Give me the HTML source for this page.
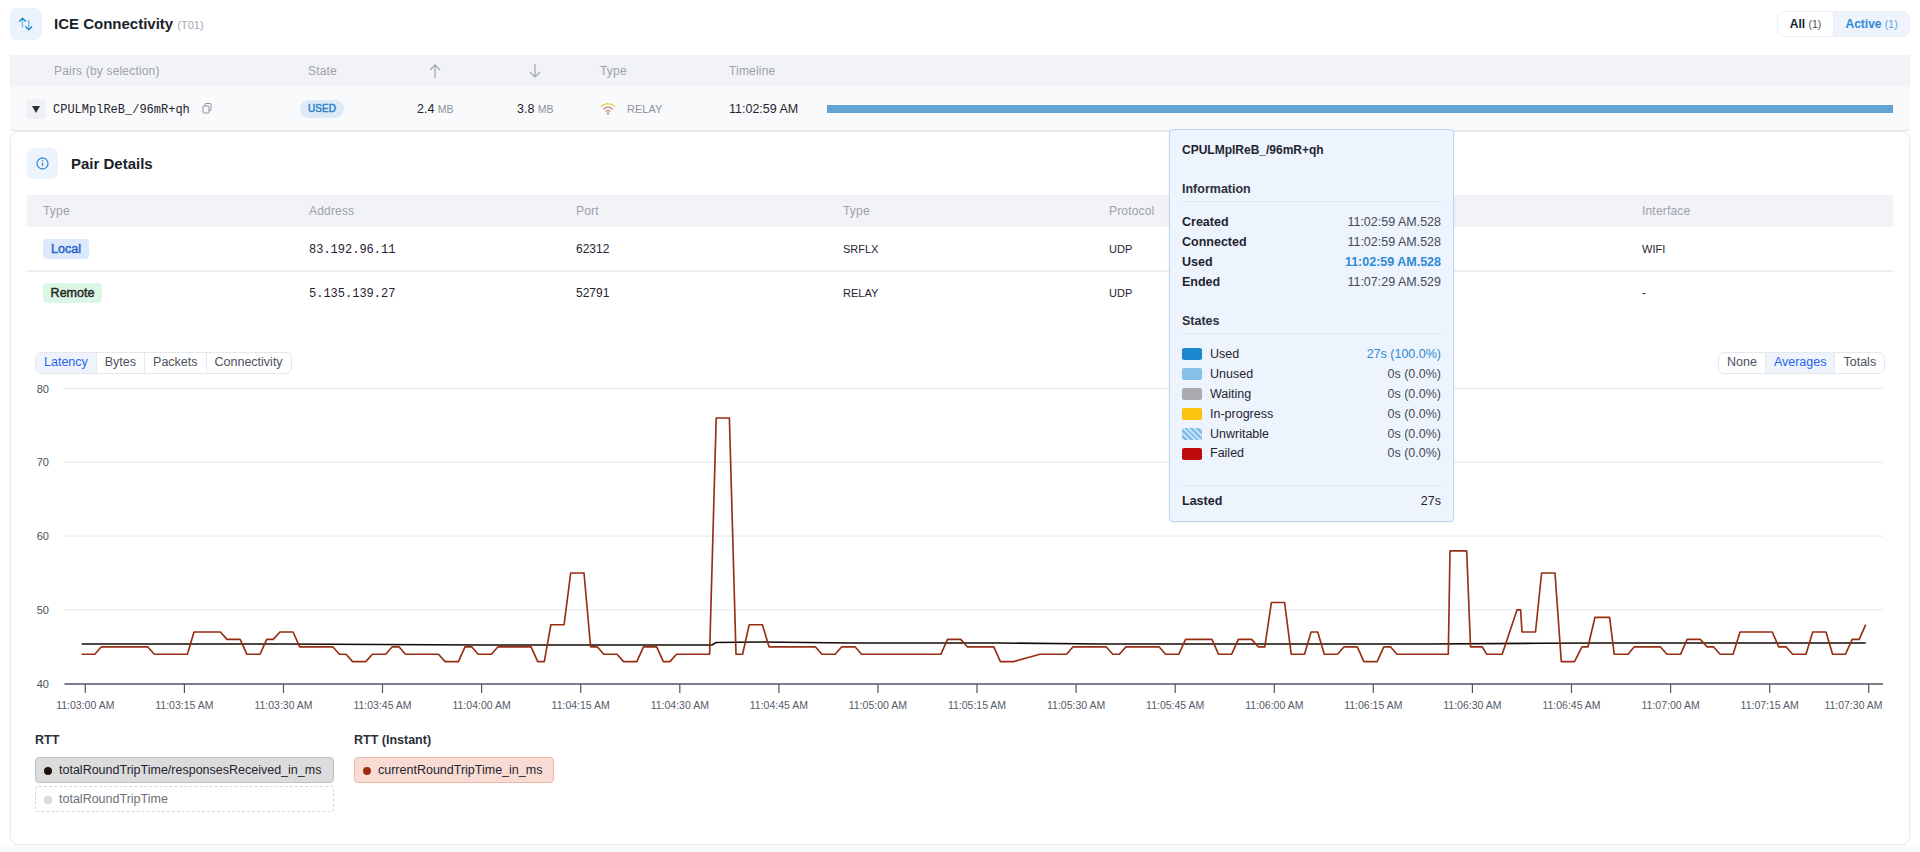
<!DOCTYPE html>
<html><head><meta charset="utf-8">
<style>
*{box-sizing:border-box;margin:0;padding:0}
html,body{width:1920px;height:852px;overflow:hidden;background:#fff}
body{font-family:"Liberation Sans",sans-serif;color:#1f2430;position:relative}
.a{position:absolute;white-space:nowrap}
.mono{font-family:"Liberation Mono",monospace}
.ib{position:absolute;width:31px;height:31px;border-radius:7px;background:#edf3fc}
.th{font-size:12px;color:#9ca1ab;letter-spacing:0.18px}
.td{font-size:12px;color:#1f2430}
.badge{position:absolute;border-radius:4px;font-size:12.5px;font-weight:normal;-webkit-text-stroke:0.45px currentColor}
.sb{font-weight:normal;-webkit-text-stroke:0.45px currentColor}
.seg{position:absolute;display:flex;border:1px solid #e6e8ec;border-radius:6px;overflow:hidden;height:22px;font-size:12.5px}
.seg div{padding:0 8px;line-height:19px;border-left:1px solid #e6e8ec;color:#4b5160}
.seg div:first-child{border-left:none}
.seg .on{background:#eef3fc;color:#2563eb}
.tt{position:absolute;left:1169px;top:129px;width:285px;height:393px;background:#eef4fd;border:1px solid #bdd6f4;border-radius:4px;box-shadow:0 1px 3px rgba(0,0,0,.06)}
.tt .a{font-size:12.5px}
.sw{position:absolute;left:12px;width:20px;height:12px;border-radius:2px}
svg text.yl{font-size:11px;fill:#4b5160;font-family:"Liberation Sans",sans-serif}
svg text.xl{font-size:10.5px;fill:#555b68;font-family:"Liberation Sans",sans-serif}
.pill{position:absolute;height:26px;border-radius:4px;font-size:12.5px;line-height:25px}
.dot{position:absolute;left:8px;top:8.5px;width:8px;height:8px;border-radius:50%}
</style></head><body>
<!-- header -->
<div class="ib" style="left:10px;top:8px;width:32px;height:32px">
<svg width="32" height="32" viewBox="0 0 32 32"><g fill="none" stroke-width="1.4" stroke-linecap="round" stroke-linejoin="round"><path d="M12.5 10.5v8.2" stroke="#7db8e8"/><path d="M18.7 12.6v8.8" stroke="#7db8e8"/><path d="M9.5 13.3l3-3 3 3" stroke="#1f86d0"/><path d="M15.7 18.8l3 3 3-3" stroke="#1f86d0"/></g></svg>
</div>
<div class="a" style="left:54px;top:15px;font-size:15px;font-weight:bold;color:#1a1f29">ICE Connectivity <span style="font-size:11px;font-weight:normal;color:#a5aab3">(T01)</span></div>
<div class="seg" style="left:1777px;top:11px;width:133px;height:26px;border-radius:8px;border-color:#eceef2"><div style="width:56px;line-height:24px;border-color:#eceef2;padding:0;text-align:center;color:#1a1f29;font-size:12px;font-weight:bold">All <span style="font-weight:normal;color:#4b5160;font-size:10.5px">(1)</span></div><div class="on" style="width:77px;line-height:24px;border-color:#eceef2;padding:0;text-align:center;color:#2d8ad6;font-size:12px;font-weight:bold">Active <span style="font-weight:normal;color:#5aa3df;font-size:10.5px">(1)</span></div></div>

<!-- pairs table -->
<div class="a" style="left:10px;top:55px;width:1900px;height:32px;background:#f2f3f6"></div>
<div class="a th" style="left:54px;top:64px">Pairs (by selection)</div>
<div class="a th" style="left:308px;top:64px">State</div>
<svg class="a" style="left:428px;top:63px" width="14" height="16"><path d="M7 15V2M2 7l5-5 5 5" fill="none" stroke="#a5aab3" stroke-width="1.3"/></svg>
<svg class="a" style="left:528px;top:63px" width="14" height="16"><path d="M7 1v13M2 9l5 5 5-5" fill="none" stroke="#a5aab3" stroke-width="1.3"/></svg>
<div class="a th" style="left:600px;top:64px">Type</div>
<div class="a th" style="left:729px;top:64px">Timeline</div>
<div class="a" style="left:10px;top:87px;width:1900px;height:44px;background:#f9fafb;border-bottom:1px solid #e5e7eb"></div>
<div class="a" style="left:26px;top:99px;width:20px;height:20px;background:#f0f1f4;border-radius:4px"></div>
<svg class="a" style="left:31px;top:104px" width="10" height="10"><path d="M1 2h8L5 9z" fill="#2b2f38"/></svg>
<div class="a mono td" style="left:53px;top:103px">CPULMplReB_/96mR+qh</div>
<svg class="a" style="left:201px;top:102px" width="12" height="12"><g fill="none" stroke="#8d929b" stroke-width="1"><rect x="4" y="1.5" width="6" height="7" rx="1"/><rect x="2" y="4" width="6" height="7" rx="1" fill="#f9fafb"/></g></svg>
<div class="badge" style="left:300px;top:100px;width:44px;height:18px;background:#dce9f6;color:#2a80c8;font-size:10px;line-height:18px;text-align:center;border-radius:9px">USED</div>
<div class="a td" style="left:417px;top:102px;font-size:12.5px">2.4 <span style="font-size:10.5px;color:#8d929b">MB</span></div>
<div class="a td" style="left:517px;top:102px;font-size:12.5px">3.8 <span style="font-size:10.5px;color:#8d929b">MB</span></div>
<svg class="a" style="left:600px;top:101px" width="16" height="14"><g fill="none" stroke-width="1.2" stroke-linecap="round"><path d="M1.5 5.5a9 9 0 0 1 13 0" stroke="#f0c419" stroke-dasharray="1.6 1.1"/><path d="M3.8 8a5.8 5.8 0 0 1 8.4 0" stroke="#c58a78"/><path d="M6 10.3a2.8 2.8 0 0 1 4 0" stroke="#c58a78"/></g><circle cx="8" cy="12.6" r="1.3" fill="#cf9a8c"/></svg>
<div class="a" style="left:627px;top:103px;font-size:11px;color:#8d929b">RELAY</div>
<div class="a td" style="left:729px;top:102px;font-size:12.5px">11:02:59 AM</div>
<div class="a" style="left:827px;top:105px;width:1066px;height:8px;background:#63a4d5"></div>

<!-- card -->
<div class="a" style="left:0;top:845px;width:1920px;height:7px;background:#f9fafb"></div>
<div class="a" style="left:10px;top:131px;width:1900px;height:714px;border:1px solid #e8eaee;border-radius:8px;background:#fff"></div>
<div class="ib" style="left:27px;top:148px">
<svg width="31" height="31" viewBox="0 0 31 31"><circle cx="15.5" cy="15.5" r="5.5" fill="none" stroke="#3d8fd8" stroke-width="1.3"/><path d="M15.5 14.5v3.5" stroke="#3d8fd8" stroke-width="1.3"/><circle cx="15.5" cy="12.7" r=".8" fill="#3d8fd8"/></svg>
</div>
<div class="a" style="left:71px;top:155px;font-size:15px;font-weight:bold;color:#1a1f29">Pair Details</div>

<div class="a" style="left:27px;top:195px;width:1866px;height:32px;background:#f2f3f6"></div>
<div class="a th" style="left:43px;top:204px">Type</div>
<div class="a th" style="left:309px;top:204px">Address</div>
<div class="a th" style="left:576px;top:204px">Port</div>
<div class="a th" style="left:843px;top:204px">Type</div>
<div class="a th" style="left:1109px;top:204px">Protocol</div>
<div class="a th" style="left:1642px;top:204px">Interface</div>
<div class="a" style="left:27px;top:270px;width:1866px;height:2px;background:#eceef2"></div>

<div class="badge" style="left:43px;top:239px;width:46px;height:20px;background:#dbe9fb;color:#2563c9;line-height:20px;text-align:center">Local</div>
<div class="a mono td" style="left:309px;top:243px">83.192.96.11</div>
<div class="a td" style="left:576px;top:242px">62312</div>
<div class="a td" style="left:843px;top:243px;font-size:11px">SRFLX</div>
<div class="a td" style="left:1109px;top:243px;font-size:11px">UDP</div>
<div class="a td" style="left:1642px;top:243px;font-size:11px">WIFI</div>

<div class="badge" style="left:43px;top:283px;width:59px;height:20px;background:#dcf6e6;color:#1f2a25;line-height:20px;text-align:center">Remote</div>
<div class="a mono td" style="left:309px;top:287px">5.135.139.27</div>
<div class="a td" style="left:576px;top:286px">52791</div>
<div class="a td" style="left:843px;top:287px;font-size:11px">RELAY</div>
<div class="a td" style="left:1109px;top:287px;font-size:11px">UDP</div>
<div class="a td" style="left:1642px;top:286px">-</div>

<div class="seg" style="left:35px;top:352px"><div class="on">Latency</div><div>Bytes</div><div>Packets</div><div>Connectivity</div></div>
<div class="seg" style="left:1718px;top:352px"><div>None</div><div class="on">Averages</div><div>Totals</div></div>

<svg class="a" style="left:0;top:0" width="1920" height="852">
<line x1="64.5" y1="388.5" x2="1883" y2="388.5" stroke="#e5e7eb" stroke-width="1"/>
<text x="49" y="392.5" text-anchor="end" class="yl">80</text>
<line x1="64.5" y1="462.3" x2="1883" y2="462.3" stroke="#e5e7eb" stroke-width="1"/>
<text x="49" y="466.3" text-anchor="end" class="yl">70</text>
<line x1="64.5" y1="536.1" x2="1883" y2="536.1" stroke="#e5e7eb" stroke-width="1"/>
<text x="49" y="540.1" text-anchor="end" class="yl">60</text>
<line x1="64.5" y1="609.9" x2="1883" y2="609.9" stroke="#e5e7eb" stroke-width="1"/>
<text x="49" y="613.9" text-anchor="end" class="yl">50</text>
<line x1="64.5" y1="684" x2="1883" y2="684" stroke="#4b5563" stroke-width="1.5"/>
<text x="49" y="688" text-anchor="end" class="yl">40</text>
<line x1="85.3" y1="684" x2="85.3" y2="693" stroke="#4b5563" stroke-width="1.2"/>
<text x="85.3" y="709" text-anchor="middle" class="xl">11:03:00 AM</text>
<line x1="184.4" y1="684" x2="184.4" y2="693" stroke="#4b5563" stroke-width="1.2"/>
<text x="184.4" y="709" text-anchor="middle" class="xl">11:03:15 AM</text>
<line x1="283.5" y1="684" x2="283.5" y2="693" stroke="#4b5563" stroke-width="1.2"/>
<text x="283.5" y="709" text-anchor="middle" class="xl">11:03:30 AM</text>
<line x1="382.5" y1="684" x2="382.5" y2="693" stroke="#4b5563" stroke-width="1.2"/>
<text x="382.5" y="709" text-anchor="middle" class="xl">11:03:45 AM</text>
<line x1="481.6" y1="684" x2="481.6" y2="693" stroke="#4b5563" stroke-width="1.2"/>
<text x="481.6" y="709" text-anchor="middle" class="xl">11:04:00 AM</text>
<line x1="580.7" y1="684" x2="580.7" y2="693" stroke="#4b5563" stroke-width="1.2"/>
<text x="580.7" y="709" text-anchor="middle" class="xl">11:04:15 AM</text>
<line x1="679.8" y1="684" x2="679.8" y2="693" stroke="#4b5563" stroke-width="1.2"/>
<text x="679.8" y="709" text-anchor="middle" class="xl">11:04:30 AM</text>
<line x1="778.9" y1="684" x2="778.9" y2="693" stroke="#4b5563" stroke-width="1.2"/>
<text x="778.9" y="709" text-anchor="middle" class="xl">11:04:45 AM</text>
<line x1="877.9" y1="684" x2="877.9" y2="693" stroke="#4b5563" stroke-width="1.2"/>
<text x="877.9" y="709" text-anchor="middle" class="xl">11:05:00 AM</text>
<line x1="977.0" y1="684" x2="977.0" y2="693" stroke="#4b5563" stroke-width="1.2"/>
<text x="977.0" y="709" text-anchor="middle" class="xl">11:05:15 AM</text>
<line x1="1076.1" y1="684" x2="1076.1" y2="693" stroke="#4b5563" stroke-width="1.2"/>
<text x="1076.1" y="709" text-anchor="middle" class="xl">11:05:30 AM</text>
<line x1="1175.2" y1="684" x2="1175.2" y2="693" stroke="#4b5563" stroke-width="1.2"/>
<text x="1175.2" y="709" text-anchor="middle" class="xl">11:05:45 AM</text>
<line x1="1274.3" y1="684" x2="1274.3" y2="693" stroke="#4b5563" stroke-width="1.2"/>
<text x="1274.3" y="709" text-anchor="middle" class="xl">11:06:00 AM</text>
<line x1="1373.3" y1="684" x2="1373.3" y2="693" stroke="#4b5563" stroke-width="1.2"/>
<text x="1373.3" y="709" text-anchor="middle" class="xl">11:06:15 AM</text>
<line x1="1472.4" y1="684" x2="1472.4" y2="693" stroke="#4b5563" stroke-width="1.2"/>
<text x="1472.4" y="709" text-anchor="middle" class="xl">11:06:30 AM</text>
<line x1="1571.5" y1="684" x2="1571.5" y2="693" stroke="#4b5563" stroke-width="1.2"/>
<text x="1571.5" y="709" text-anchor="middle" class="xl">11:06:45 AM</text>
<line x1="1670.6" y1="684" x2="1670.6" y2="693" stroke="#4b5563" stroke-width="1.2"/>
<text x="1670.6" y="709" text-anchor="middle" class="xl">11:07:00 AM</text>
<line x1="1769.7" y1="684" x2="1769.7" y2="693" stroke="#4b5563" stroke-width="1.2"/>
<text x="1769.7" y="709" text-anchor="middle" class="xl">11:07:15 AM</text>
<line x1="1868.7" y1="684" x2="1868.7" y2="693" stroke="#4b5563" stroke-width="1.2"/>
<text x="1853.5" y="709" text-anchor="middle" class="xl">11:07:30 AM</text>
<polyline points="81.6,644.0 280.0,644.0 480.0,645.0 712.0,645.0 716.0,642.5 760.0,642.0 850.0,643.0 1000.0,643.0 1100.0,644.0 1430.0,644.0 1540.0,643.3 1600.0,643.0 1865.7,643.0" fill="none" stroke="#150b06" stroke-width="1.6"/>
<polyline points="81.6,654.2 88.2,654.2 94.8,654.2 101.4,646.8 108.0,646.8 114.7,646.8 121.3,646.8 127.9,646.8 134.5,646.8 141.1,646.8 147.7,646.8 154.3,654.2 160.9,654.2 167.5,654.2 174.1,654.2 180.8,654.2 187.4,654.2 194.0,632.0 200.6,632.0 207.2,632.0 213.8,632.0 220.4,632.0 227.0,639.4 233.6,639.4 240.2,639.4 246.8,654.2 253.5,654.2 260.1,654.2 266.7,639.4 273.3,639.4 279.9,632.0 286.5,632.0 293.1,632.0 299.7,646.8 306.3,646.8 313.0,646.8 319.6,646.8 326.2,646.8 332.8,646.8 339.4,654.2 346.0,654.2 352.6,661.6 359.2,661.6 365.8,661.6 372.4,654.2 379.0,654.2 385.7,654.2 392.3,646.8 398.9,646.8 405.5,654.2 412.1,654.2 418.7,654.2 425.3,654.2 431.9,654.2 438.5,654.2 445.1,661.6 451.8,661.6 458.4,661.6 465.0,646.8 471.6,646.8 478.2,654.2 484.8,654.2 491.4,654.2 498.0,646.8 504.6,646.8 511.2,646.8 517.9,646.8 524.5,646.8 531.1,646.8 537.7,661.6 544.3,661.6 550.9,624.7 557.5,624.7 564.1,624.7 570.7,573.0 577.4,573.0 584.0,573.0 590.6,646.8 597.2,646.8 603.8,654.2 610.4,654.2 617.0,654.2 623.6,661.6 630.2,661.6 636.8,661.6 643.5,646.8 650.1,646.8 656.7,646.8 663.3,661.6 669.9,661.6 676.5,654.2 683.1,654.2 689.7,654.2 696.3,654.2 702.9,654.2 709.6,654.2 716.2,418.0 722.8,418.0 729.4,418.0 736.0,654.2 742.6,654.2 749.2,624.7 755.8,624.7 762.4,624.7 769.0,646.8 775.7,646.8 782.3,646.8 788.9,646.8 795.5,646.8 802.1,646.8 808.7,646.8 815.3,646.8 821.9,654.2 828.5,654.2 835.1,654.2 841.8,646.8 848.4,646.8 855.0,646.8 861.6,654.2 868.2,654.2 874.8,654.2 881.4,654.2 888.0,654.2 894.6,654.2 901.2,654.2 907.9,654.2 914.5,654.2 921.1,654.2 927.7,654.2 934.3,654.2 940.9,654.2 947.5,639.4 954.1,639.4 960.7,639.4 967.3,646.8 974.0,646.8 980.6,646.8 987.2,646.8 993.8,646.8 1000.4,661.6 1007.0,661.6 1013.6,661.6 1040.0,654.2 1046.7,654.2 1053.3,654.2 1059.9,654.2 1066.5,654.2 1073.1,646.8 1079.7,646.8 1086.3,646.8 1092.9,646.8 1099.5,646.8 1106.1,646.8 1112.8,654.2 1119.4,654.2 1126.0,646.8 1132.6,646.8 1139.2,646.8 1145.8,646.8 1152.4,646.8 1159.0,646.8 1165.6,654.2 1172.2,654.2 1178.9,654.2 1185.5,639.4 1192.1,639.4 1198.7,639.4 1205.3,639.4 1211.9,639.4 1218.5,654.2 1225.1,654.2 1231.7,654.2 1238.3,639.4 1245.0,639.4 1251.6,639.4 1258.2,646.8 1264.8,646.8 1271.4,602.5 1278.0,602.5 1284.6,602.5 1291.2,654.2 1297.8,654.2 1304.5,654.2 1311.1,632.0 1317.7,632.0 1324.3,654.2 1330.9,654.2 1337.5,654.2 1344.1,646.8 1350.7,646.8 1357.3,646.8 1363.9,661.6 1370.5,661.6 1377.2,661.6 1383.8,646.8 1390.4,646.8 1397.0,654.2 1403.6,654.2 1410.2,654.2 1416.8,654.2 1423.4,654.2 1430.0,654.2 1436.6,654.2 1443.3,654.2 1448.3,654.2 1450.0,550.9 1466.7,550.9 1470.5,646.8 1482.3,646.8 1486.6,654.2 1502.2,654.2 1517.0,609.9 1520.6,609.9 1522.0,632.0 1535.5,632.0 1541.6,573.0 1555.0,573.0 1561.3,661.6 1574.5,661.6 1582.0,646.8 1588.0,646.8 1595.0,617.3 1609.6,617.3 1614.2,654.2 1628.0,654.2 1634.3,646.8 1660.3,646.8 1667.0,654.2 1680.6,654.2 1687.1,639.4 1700.3,639.4 1707.0,646.8 1713.4,646.8 1720.2,654.2 1733.1,654.2 1740.0,632.0 1772.3,632.0 1778.7,646.8 1786.0,646.8 1792.6,654.2 1806.0,654.2 1812.7,632.0 1826.0,632.0 1832.6,654.2 1845.5,654.2 1852.2,639.4 1859.2,639.4 1865.7,624.7" fill="none" stroke="#952e12" stroke-width="1.65" stroke-linejoin="round"/>
</svg>

<div class="a" style="left:35px;top:733px;font-size:12.5px;font-weight:bold;color:#2b303a">RTT</div>
<div class="a" style="left:354px;top:733px;font-size:12.5px;font-weight:bold;color:#2b303a">RTT (Instant)</div>
<div class="pill" style="left:35px;top:757px;width:299px;background:#dcdcdd;border:1px solid #c0c2c6"><span class="dot" style="background:#1e140d"></span><span style="position:absolute;left:23px;color:#1f2430">totalRoundTripTime/responsesReceived_in_ms</span></div>
<div class="pill" style="left:35px;top:786px;width:299px;background:#fff;border:1px dashed #d6d8dc"><span class="dot" style="background:#d8dbe0"></span><span style="position:absolute;left:23px;color:#6b7079">totalRoundTripTime</span></div>
<div class="pill" style="left:354px;top:757px;width:200px;background:#f8dcd3;border:1px solid #ebb9aa"><span class="dot" style="background:#9a2d12"></span><span style="position:absolute;left:23px;color:#1f2430">currentRoundTripTime_in_ms</span></div>

<!-- tooltip -->
<div class="tt">
<div class="a" style="left:12px;top:13px;font-weight:bold;color:#1f2430;font-size:12px">CPULMplReB_/96mR+qh</div>
<div class="a" style="left:12px;top:52px;font-weight:bold;color:#2b303a">Information</div>
<div class="a" style="left:12px;top:71px;width:259px;height:1px;background:#dfe5ee"></div>
<div class="a" style="left:12px;top:85px;font-weight:bold">Created</div><div class="a" style="right:12px;top:85px;color:#454a55">11:02:59 AM.528</div>
<div class="a" style="left:12px;top:105px;font-weight:bold">Connected</div><div class="a" style="right:12px;top:105px;color:#454a55">11:02:59 AM.528</div>
<div class="a" style="left:12px;top:125px;font-weight:bold">Used</div><div class="a" style="right:12px;top:125px;color:#2d8ad6;font-weight:bold">11:02:59 AM.528</div>
<div class="a" style="left:12px;top:145px;font-weight:bold">Ended</div><div class="a" style="right:12px;top:145px;color:#454a55">11:07:29 AM.529</div>
<div class="a" style="left:12px;top:184px;font-weight:bold;color:#2b303a">States</div>
<div class="a" style="left:12px;top:203px;width:259px;height:1px;background:#dfe5ee"></div>
<div class="sw" style="top:218px;background:#1a87cf"></div><div class="a" style="left:40px;top:217px">Used</div><div class="a" style="right:12px;top:217px;color:#2d8ad6">27s (100.0%)</div>
<div class="sw" style="top:238px;background:#86c0ea"></div><div class="a" style="left:40px;top:237px">Unused</div><div class="a" style="right:12px;top:237px;color:#454a55">0s (0.0%)</div>
<div class="sw" style="top:258px;background:#a9abb0"></div><div class="a" style="left:40px;top:257px">Waiting</div><div class="a" style="right:12px;top:257px;color:#454a55">0s (0.0%)</div>
<div class="sw" style="top:278px;background:#fcc30d"></div><div class="a" style="left:40px;top:277px">In-progress</div><div class="a" style="right:12px;top:277px;color:#454a55">0s (0.0%)</div>
<div class="sw" style="top:298px;background:repeating-linear-gradient(45deg,#bfe0f7 0 2px,#7fb9e6 2px 4px)"></div><div class="a" style="left:40px;top:297px">Unwritable</div><div class="a" style="right:12px;top:297px;color:#454a55">0s (0.0%)</div>
<div class="sw" style="top:318px;background:#be0a0a"></div><div class="a" style="left:40px;top:316px">Failed</div><div class="a" style="right:12px;top:316px;color:#454a55">0s (0.0%)</div>
<div class="a" style="left:12px;top:355px;width:259px;height:1px;background:#dfe5ee"></div>
<div class="a" style="left:12px;top:364px;font-weight:bold">Lasted</div><div class="a" style="right:12px;top:364px;color:#1f2430">27s</div>
</div>
</body></html>
